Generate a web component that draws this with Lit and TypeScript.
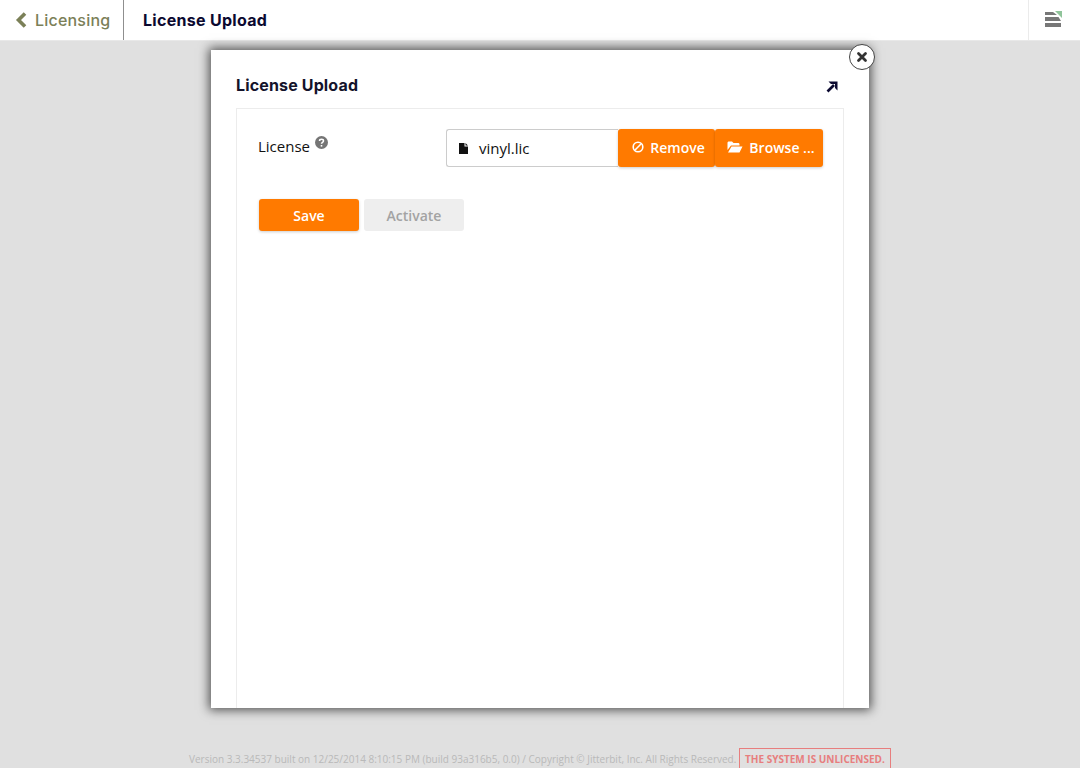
import { LitElement, html, css } from "lit";
import { customElement } from "lit/decorators.js";

@customElement("app-root")
export class AppRoot extends LitElement {
  static styles = css`
    :host { display: block; height: 768px; overflow: hidden; background: #e0e0e0; font-family: "Open Sans", "Noto Sans", sans-serif; }
    .top { height: 40px; background: #fff; border-bottom: 1px solid #e8e8e8; display: flex; align-items: stretch; }
    .back { width: 124px; box-sizing: border-box; border-right: 1px solid #8f8f8f; display: flex; align-items: center; gap: 8px; padding-left: 15px; color: #7b8058; font: 500 16px Inter, sans-serif; letter-spacing: 0.2px; }
    .title { flex: 1; display: flex; align-items: center; padding-left: 19px; font: 700 16px Inter, sans-serif; color: #0b0930; letter-spacing: 0.3px; }
    .menu { width: 52px; border-left: 1px solid #ebebeb; display: flex; align-items: center; justify-content: center; padding: 0 2px 2px 0; box-sizing: border-box; }
    .stage { height: 707px; display: flex; justify-content: center; align-items: flex-start; padding-top: 9px; box-sizing: border-box; }
    .modal { position: relative; width: 658px; height: 658px; background: #fff; box-shadow: 0 0 10px 2px rgba(0,0,0,.65); padding: 0 25px; box-sizing: border-box; display: flex; flex-direction: column; }
    .close { position: absolute; top: -6px; right: -6px; width: 26px; height: 26px; box-sizing: border-box; border-radius: 50%; background: #fff; border: 1px solid #444; display: flex; align-items: center; justify-content: center; }
    .mhead { height: 58px; flex: none; box-sizing: border-box; padding-top: 25px; display: flex; justify-content: space-between; align-items: flex-start; }
    .mtitle { font: 700 16px/20px Inter, sans-serif; color: #14132b; letter-spacing: 0.15px; }
    .expand { margin: 6px 6px 0 0; display: block; }
    .panel { flex: 1; border: 1px solid #ececec; border-bottom: 0; padding: 20px 20px 0 21px; }
    .row { display: flex; align-items: flex-start; }
    .label { width: 188px; display: flex; gap: 5px; font-size: 15px; line-height: 34px; color: #111; }
    .help { margin-top: 7px; display: block; }
    .file { width: 172px; height: 38px; box-sizing: border-box; border: 1px solid #ccc; border-right: 0; border-radius: 3px 0 0 3px; display: flex; align-items: center; gap: 11px; padding-left: 12px; font-size: 15px; color: #111; }
    .btn { height: 38px; border: 0; background: #ff7a00; color: #fff; font: 600 14px "Open Sans", sans-serif; display: flex; align-items: center; justify-content: center; gap: 6px; border-radius: 3px; box-shadow: 0 1px 3px rgba(0,0,0,.2); padding: 0; }
    .remove { width: 97px; padding: 0 0 2px 4px; }
    .browse { width: 108px; padding: 0 0 2px 4px; }
    .actions { display: flex; gap: 5px; margin: 32px 0 0 1px; }
    .act { width: 100px; height: 32px; }
    .off { background: #eee; color: #a3a3a3; box-shadow: none; }
    .foot { height: 20px; display: flex; justify-content: flex-start; align-items: flex-start; padding-left: 189px; }
    .ver { font-size: 10px; color: #b9b9b9; margin-top: 4px; line-height: 14px; white-space: nowrap; width: 550px; }
    .warn { border: 1px solid #e77e7e; color: #e77e7e; font-size: 10px; font-weight: 700; padding: 3px 5px 0; height: 30px; box-sizing: border-box; line-height: 15px; white-space: nowrap; }
  `;

  render() {
    return html`
      <div class="top">
        <div class="back">
          <svg width="12" height="16" viewBox="0 0 12 16"><path d="M10 1.500 L3.500 8 L10 14.500" fill="none" stroke="#7b8058" stroke-width="3.600"/></svg>
          <span>Licensing</span>
        </div>
        <div class="title">License Upload</div>
        <div class="menu">
          <svg width="17" height="16" viewBox="0 0 17 16">
            <path d="M10 0 H17 V7 Z" fill="#8fc49a"/>
            <path d="M0 1 H8 L12 4 H0 Z M0 6 H13.500 L16 10 H0 Z" fill="#777"/>
            <rect y="12" width="16" height="4" fill="#777"/>
          </svg>
        </div>
      </div>
      <div class="stage">
        <div class="modal">
          <div class="close">
            <svg width="12" height="12" viewBox="0 0 12 12"><path d="M2.500 2.500 L9.500 9.500 M9.500 2.500 L2.500 9.500" stroke="#333" stroke-width="2.800" stroke-linecap="round"/></svg>
          </div>
          <div class="mhead">
            <div class="mtitle">License Upload</div>
            <svg class="expand" width="12" height="12" viewBox="0 0 12 12"><path d="M1.500 10.500 L8 4" fill="none" stroke="#0b0930" stroke-width="2.600"/><path d="M2.500 0.500 H11.500 V9.500 L9 7 V3 H5 Z" fill="#0b0930"/></svg>
          </div>
          <div class="panel">
            <div class="row">
              <div class="label">
                <span>License</span>
                <svg class="help" width="13" height="13" viewBox="0 0 13 13"><circle cx="6.500" cy="6.500" r="6.500" fill="#757575"/><path d="M4.500 5 C4.500 2.800 8.500 2.800 8.500 5 C8.500 6.500 6.500 6.300 6.500 7.800" fill="none" stroke="#fff" stroke-width="1.500"/><rect x="5.700" y="9" width="1.600" height="1.600" fill="#fff"/></svg>
              </div>
              <div class="file">
                <svg width="9" height="11" viewBox="0 0 9 11"><path d="M0 0 H5.500 V3.500 H9 V11 H0 Z M6.500 0 L9 2.500 H6.500 Z" fill="#111"/></svg>
                <span>vinyl.lic</span>
              </div>
              <button class="btn remove">
                <svg width="12" height="12" viewBox="0 0 12 12"><circle cx="6" cy="6" r="4.800" fill="none" stroke="#fff" stroke-width="1.600"/><path d="M2.800 9.200 L9.200 2.800" stroke="#fff" stroke-width="1.600"/></svg>
                <span>Remove</span>
              </button>
              <button class="btn browse">
                <svg width="16" height="12" viewBox="0 0 16 12"><path d="M0.500 2 C0.500 1 1 0.500 2 0.500 H5 L6.500 2 H11 C12 2 12.500 2.500 12.500 3.500 V4.500 H4 L0.500 9 Z M4.500 5.500 H15.500 L12.500 11.500 H1 Z" fill="#fff"/></svg>
                <span>Browse ...</span>
              </button>
            </div>
            <div class="actions">
              <button class="btn act">Save</button>
              <button class="btn act off">Activate</button>
            </div>
          </div>
        </div>
      </div>
      <div class="foot">
        <div class="ver">Version 3.3.34537 built on 12/25/2014 8:10:15 PM (build 93a316b5, 0.0) / Copyright © Jitterbit, Inc. All Rights Reserved.</div>
        <div class="warn">THE SYSTEM IS UNLICENSED.</div>
      </div>
    `;
  }
}
